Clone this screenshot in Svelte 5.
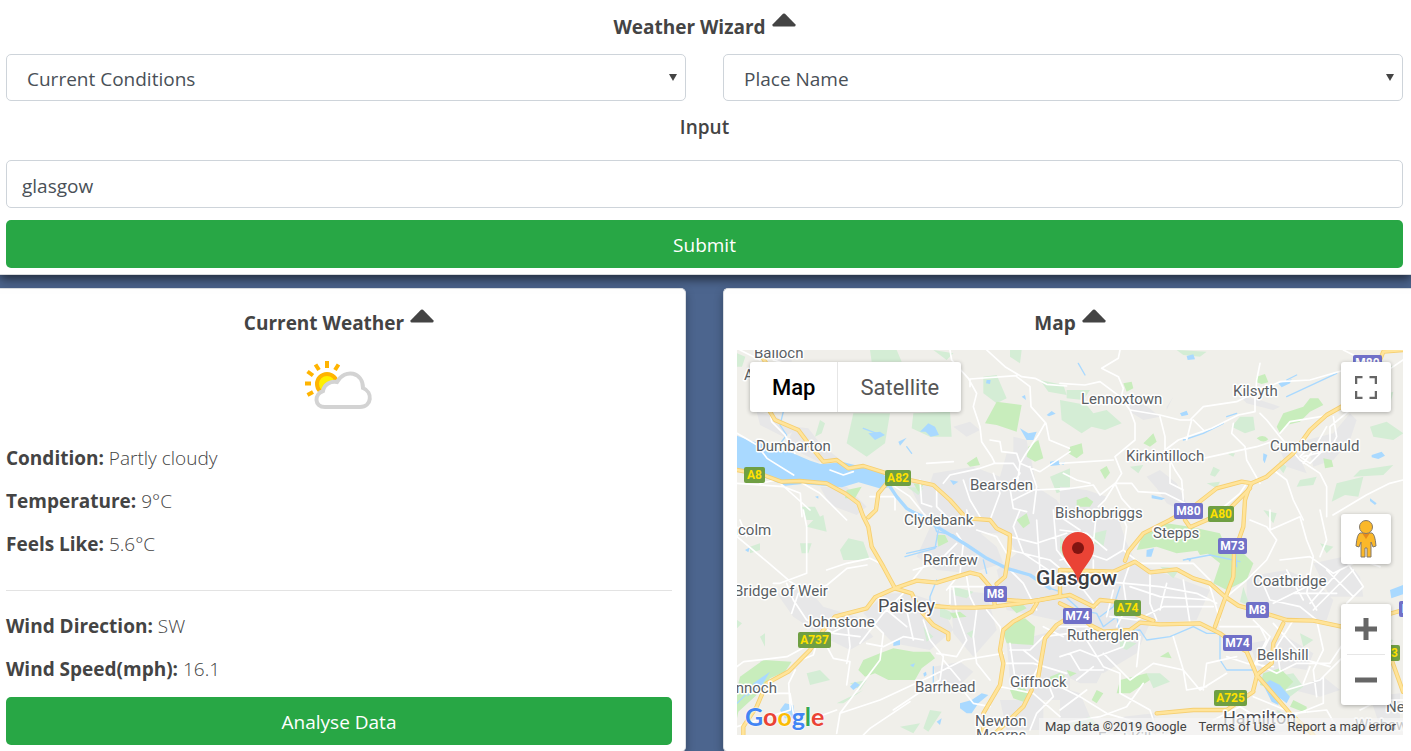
<script>
  let report = $state('current');
  let lookup = $state('place');
  let query = $state('glasgow');

  const conditions = [
    ['Condition:', 'Partly cloudy'],
    ['Temperature:', '9°C'],
    ['Feels Like:', '5.6°C']
  ];
  const wind = [
    ['Wind Direction:', 'SW'],
    ['Wind Speed(mph):', '16.1']
  ];

  // The map is drawn in four tiles, three units to the pixel.
  const tiles = [
    {
      at: '0 0',
      urban: 'M225 440l40 5 35 45 55 45-60 10-60-30-30-35ZM640 580l120-20 80 30 20-70 70 0 20 100 60 40 40 60-40 40-350 0-60-60ZM300 620l80 0 60 60-30 25-80-30ZM560 600l90 20 20 60-60 20ZM110 395l60 15 60 40-40 20-70-35ZM880 470l40 10 10 60-50 0ZM700 440l50-15 30 25-40 20ZM165 210l50 0 0 35-50 0Z',
      park: 'M450 210l80 0 15 35-90 0ZM400 400l110 0-15 90-55 40-60-40ZM580 400l110-5 5 75-65 0-55-25ZM790 290l40-5 30 70-30 15-40-30ZM870 210l35 0-5 40-30-20ZM300 420l15 10-10 30-20 10ZM560 620l50 5-15 20ZM960 300l70 15 10 30-55-10ZM640 210l60 10-20 20ZM51 220l25 10-10 30-15 0ZM245 680l40 0 20 40-45 0ZM990 590l60-25 0 60-40 15ZM540 330l30 0-10 30Z',
      green: 'M830 365l75 10-15 80-60-20-35-5ZM925 500l30-20 15 55-25 10-25-15ZM740 550l30-20 10 25-30 5ZM380 630l45-10-20 35-30 0ZM180 525l35 0 0 15-30 0ZM580 610l30 5-15 20Z',
      water: 'M51 467l40 15 110 30 70 30 30 10 70-5 60 15 60 20 15 40-20 5-70-20-50 15-120-10-50 5-90-35-55-10ZM445 460l35-5 15 10-30 15ZM600 455l25-25 20 10 12 25-25 5-15-15ZM535 485l25-12-20 24ZM900 445l25 15 25-5-10 25-20 0ZM990 545l25-5 5 15-30 3ZM800 300l12 0-2 12-12-2ZM905 350l10-5 3 15ZM980 405l15-12 12 8-20 8ZM285 650l10-2 0 8ZM690 600l25 5-15 10Z',
      river: 'M490 595L530 650 560 685 650 725M190 395l-10 40 20 30-15 20 30 40M430 445l40 15M560 500l15 20',
      minor: 'M690 210l5 30 50 55 25 45-10 40 20 60 5 45 30 45 10 20-45 15-90 20-20 25M800 210l55 50 50 30 40 5 35 18 60 5M750 297l140-10M890 290l40 30 3 60 45 50 10 50 60 25M975 430l-20 35-40 60-15 25-10 75M810 480l30 5 5 30 45 5 10 30 60 25 90-60M820 550l60 0 20 30-30 45 10 60 40 10M150 395l5 30 40 40 30 55M51 460l60 35 30 40 80 50M51 610l140 10 50 20 5 70 M120 610l50-10 100 90M240 605l60 35 40 40 40 40M330 570l40 15 30-10M510 610l60 40 40 50 20 20M600 600l5 70 30 10M650 620l0 60 30 30M730 600l20 60 30 50M820 580l20 60-30 80M880 660l60-30 110-5M930 560l20 60-10 80 M750 300l0 20M620 550l80-5M450 650l75 0 0 40M160 240l30 10 10 50M60 210l60 30'
    },
    {
      at: '1020 0',
      urban: 'M210 360l40 10 50 40-50 10-40-25ZM540 350l60 10 60 20-20 10-80-20ZM260 590l40-20 50 40 30 60-20 20-40-20-30-45ZM740 480l80-20 50-60 20 20-20 60-50 60-60 20ZM0 620l80 10 60 20-30 50-110 0ZM660 510l50 0 30 70-60-20ZM320 380l20-30-20 40Z',
      park: 'M0 360l80 15 20 25 40-10 45 40-50 20-40-10-30 20-60-40ZM540 410l40 0 5 40-30 10-40-20ZM930 440l50-15 50 35-30 20-60-10ZM950 350l50-15-10 40-50 20ZM830 610l80-20-15 60-40-5-40 20ZM720 600l50-10-10 25-50 5ZM900 570l100-15-30 30-90 5ZM350 210l90 5-20 15-50-5ZM210 560l40-5-15 25ZM460 560l20 10-15 20-15-5ZM20 330l70 0-20 30-50-5ZM500 520l25 0-5 10ZM900 250l60-10 40 20-40 20-50 5ZM660 540l20 20-10 20-15-20ZM440 610l40-5-10 20Z',
      green: 'M190 310l25-5 5 20-20 10ZM590 290l25-8 10 25-20 5-15-5ZM650 440l20-40 60-20 20-25 25 0 15 20-40 20-30 30-40 10-20 25ZM30 500l35-10 5 30-20 15-25-15ZM120 570l20-12 10 20-15 20ZM50 660l30-10 20 15-10 15-40 0ZM250 490l30-30 10 25-20 15ZM590 475q20-15 35 3q-15 15-35-3ZM790 535l25 5 5 20-25 5Z',
      water: 'M380 228l20-5 5 15-22 2ZM655 310l40-12-5 12-25 12ZM360 400l20-8 5 12-20 5ZM275 645l40 10-10 5-30-5ZM935 525l30-10 10 12-20 10-20-5ZM610 520l12 5-8 25-5-10ZM930 655l20 15-5 5-15-12ZM0 550l15-5-5 10Z',
      river: 'M55 250l20 35M680 350l150-70M370 480l60-20 60-30M500 410l30-10M680 300l30-15',
      minor: 'M180 210l-5 25-50 30 10 5 40 20 15 35-5 20 25 25M0 310l75 5 45-10 60 45 30 40 90 15 60 15 30 0 40-40 100-15 40-20 90-40 90-5 155-45M210 390l15 40 0 50-60 50 20 50-50 80-20 20M0 550l160-10M300 410l15 60 0 40 30 60 20 30 5 60M380 480l15-60M315 510l40-30 100-35 80-40 50-10 0-50M400 420l30 30M430 535l160-35 60-20M520 430l-5 30 40 40 5 40 40 70M600 400l20 20 40 50 60 70 60 40 20 40 0 90M640 570l40 30 20 60 30 60M660 460l30-35 60-10 60-10M800 440l-40 70-30 40 M820 410l10 60-20 40-80 20M870 390l-60 50 0 50-60 60-30-20 30-30M1029 600l-40 10-70 35-50 30-50 30M850 210l60 30 60 40 59-40M0 630l100-15 20 30 45-35 50 0 20 25 80 5 60 30M165 610l20 45 40 45M480 690l60-50 20-30M600 250l-10 50-3 40M10 580l40 20 40 10M330 550l0 60 40 20'
    },
    {
      at: '0 690',
      urban: 'M640 30l130 30 60 50 20 50-100 30-100-10-60-40ZM850 0l200 0 0 340-90-20-100-20-30-120 60-50-50-90ZM500 250l70 0 90 30 40 80-70 60-110-20-90-90ZM170 250l90-20 50 60 100 30 50 60-70 40-80-40-90-60ZM690 240l110 10 30 110-70 80-60-70ZM860 400l190-50 0 220-120 0-60-60ZM640 470l80-15 40 30-50 50-50-10ZM840 570l130 0 0 90-110 0ZM120 450l80 10-20 30-60-5Z',
      park: 'M280 30l30-15 10 50-60-15ZM385 85l45 10 20 55-80 0-10-30ZM240 100l35 0-10 30-20 0ZM90 110l30-10 0 20-30 10ZM260 490l40-10 30 30-60 15ZM430 540l-60 40-20 0 40-20ZM630 600l35 5-40 60-15-10ZM610 350l30 30-20 15ZM700 230l60 15-20 20-40-10ZM120 380l15-10 0 40ZM51 330l15 10-15 15ZM660 290l40 20-10 20-30-10ZM390 520l50-10-20 30ZM740 370l20-10-5 25ZM540 650l60-10-20 30Z',
      green: 'M430 450l50-20 40-15 60 10 50 0 15 20-40 30-20 35-80 0-40-20-30 10-20-20ZM870 340l45-15 30 25-5 55-80-5-10-30ZM60 500l70-50 85 5-20 30-45 20-40 50-55 50-8 40 0-90ZM650 75l25 0 10 20-30 15ZM890 30l30-20 10 30-20 15ZM870 290l30-15 20 20-30 15ZM690 310l30-5 20 15-40 5ZM990 500l50-20-10 30-40 10ZM870 540l40-10 20 25-20 20-30-10Z',
      water: 'M180 600l15-20 25 5 5 40-30 0ZM720 580l35-10 30-20 20 5-30 25-20 30-15 0-20-15ZM75 120l15-8-5 15ZM520 395l20-5 0 15-20 3ZM610 490l8-5 2 10-8 5ZM570 465l15-5-5 12ZM390 530l15-15 15 10-20 15ZM100 520l50-35-30 50-40 25ZM650 635l15-10-5 20ZM880 620l12 0-5 10Z',
      river: 'M640 35L650 65 700 75 740 105 800 145 860 175 930 195 990 235 1020 245M655 60l-10 55-90 25M650 110l-90 20M790 150l10 40M630 320l0-60 20-50M51 580l60-60M640 470l0 60',
      minor: 'M51 80l90 75 70 60 50 30 60-20 60-50 60-10M250 0l10 50 0 140-80 30-20 0M200 220l20 50 40 60 60 20M320 180l60-20 70-15 30 15M51 470l20-15 130-15 110-60 60-30M210 485l20-30 50-20 20-70M310 390l30 55 50 10-10 70M380 310l10 100-10 50M460 340l30 30-10 80-120 160-10 60M360 610l120-40 150-70 100-50 120-20M570 575l-120 80-20 20M520 600l90-60 50-30 10-70-40-50-20-60M440 400l50 10 60-30 60 10M550 250l-60 60-70 90M560 300l20 90M500 300l60 50M740 200l10 60 20 40-10 80 10 80 40 50M700 230l10 80 30 80-30 50-60-10M680 240l40-50 10-90-20-30M770 60l60 20 30 50M750 50l-10-50M860 170l50 50 40 80M900 0l-20 50 30 80 90 60M870 80l80 20 90-30M870 120l120 30 60 50M950 30l10 150M1000 0l10 120 40 50M690 280l0-50 120 0M800 300l40 50 10 40M870 420l60 0 40-40 80-10M850 460l90 0 100 30M840 530l100 20 80 70M890 540l-20-140M980 510l20 50-50 50-20 50M680 520l40 10 40 50 50 10M670 450l50 60M60 540l50 10 100 0 10 60M51 650l160-50-5-80 20-40M240 640l110-40M215 310l20-60M290 340l50 30 80 10M80 80l-20-50M610 170l-40 50M580 180l70-20 60-60M970 350l60 30 M910 420l50 40-30 60'
    },
    {
      at: '1020 690',
      urban: 'M0 0l170 10 30 90 30 60 220 80-40 90-140 10-40 90-100 60-80-20-50-60ZM0 410l90-10 50 60-30 60-50 0-60-30ZM560 200l120-20 90 40 50 50-20 60-140 0-100-40ZM570 400l110-20 80 50-20 50-60-10-30 60-50-30ZM570 620l90-20 60 60-150 15ZM760 160l90-20 50 60 10 60-100 0ZM0 530l60 20 30 70-90 50ZM930 560l90-10 0 110-60-10ZM190 620l90-10 20 60-100 5ZM700 540l90-40 50 40-60 20Z',
      park: 'M100 70l40-10-10 50-30-10ZM180 390l50 10-30 20-20-10ZM610 0l40 10-10 30ZM550 230l20 60-30-15ZM780 100l40 10-20 20ZM260 490l40 0 30 25-50 20ZM30 640l60-20 30 30-70 15ZM650 600l50 20-30 20ZM300 170l60 5-20 30ZM0 80l20 20-20 30ZM640 500l60-10 30 40-40 30-60-20ZM950 380l50 10-20 30ZM720 370l40 20-30 20Z',
      green: 'M260 60l60-20 70 10 90 20 20 50 40 0 40 40-20 50-60 30-40-20 20-60-50-40-80 10-60-20-60 10 20-50ZM180 510l80-20 10 20-60 40-40 0ZM610 490l50-15 40 40-30 30-70-20ZM110 540l20 10-20 30-15-10ZM400 100l60-5 20 30-60 10ZM300 440l25-15 10 20ZM0 110l40-10 0 30-30 10ZM20 480l30 10-20 10ZM700 570l40 20 0 20-50-20Z',
      water: 'M260 120l22-5-8 25-15 0ZM990 240l39-15 0 28-35 12ZM610 525l20-15 30 15 30 35-10 20-20-15-5 20-20-10ZM500 100l15-5 0 12ZM380 145l15 0-5 10Z',
      river: 'M0 245L60 300 110 310 130 350 170 320 180 365 240 360 260 390 330 380 400 350 440 370 480 370 480 450 500 480 580 480 630 530 700 630M370 150l80-15 90 20M180 230l-20 60-40 30M30 180l-10 40M530 170l-5-80',
      minor: 'M0 150l80-20 60 20 50-30 10-70-20-50M190 120l50 40 160 0 50 50M80 190l60 25 160 15 110 20 60 30M160 240l-20 80M210 160l-20 60 10 70-30 60M210 230l90 30 150 10M150 320l80 10 80-40 150 0M270 190l0 90 20 50M320 220l-20 80M370 210l20 130M210 360l-20 50-80 30-50-20-60 20M80 390l50 80 50 20 0 60 90 50 20 60M130 430l80 80 70-50 90 20 10 60 60-10M240 380l-10 90M0 350l90 0M30 430l30 50 70 0M0 530l60 30 80 50 100 30M250 520l-50 70-80 30-120 20M340 380l30 100 50 60 80-50M580 470l40-80-20-40-120 0M500 260l60-50 60-60 30-60-30-40-50-20M660 150l90-10 70 50 80-40 60 20M600 200l30 70 90 20 50 40 20 90-30 60 10 80M640 340l100 110 70 20M580 330l50 50-40 80 60 30 60-30 100 0 40-60M700 330l-50 80 10 70M530 440l-90 20-10 80M630 60l0-60M630 60l90-40 20 70 20 50-20 110 30 50M780 0l20 90-20 50M840 180l-90 100M880 180l-120 120M800 180l80 80M850 140l60 90-50 50M700 250l130 0M640 280l120-60M680 180l50 90M500 440l60 20 80 10M680 540l100-30 70-70M790 500l0 80-100 40M580 560l120 50 100-10 40 70M460 630l80-40 50 30 30 55M0 600l80-60M100 470l-50 40M0 180l120 0M40 200l70 90M100 150l0 70M0 60l80 10 60 50M110 0l-10 100M0 20l60 40M450 230l30 100M750 470l-20 50M900 600l60-30 69 0M960 500l-20 60'
    }
  ];

  const majors = [
    'M150 395L165 420 235 450 265 490 310 545 350 540 385 565 430 558 500 580 570 600 640 615 690 660 730 705 745 715 810 720 830 745 870 765 868 810 855 890 830 912',
    'M51 570L130 585 185 605 240 603 320 610 375 640 415 670 430 710 445 740 455 800 490 860 525 925',
    'M500 610L475 640 468 690 445 712',
    'M70 1365L70 1340 110 1280 140 1210 205 1175 270 1110 310 1050 345 1010 440 985 465 952 525 925 590 902 650 908 750 878 780 885 810 920 835 945 860 960 930 965 1020 950 1050 945 1120 980 1140 960 1190 965M525 925L575 940 600 990 640 1035 685 1060 685 1078',
    'M640 978L690 982 765 983 820 980 900 970 960 960 1020 948M825 980l-5-35',
    'M950 970L935 995 880 1025 850 1050 840 1110 850 1150 840 1215 790 1300 790 1365',
    'M1050 1010L1010 1035 975 1075 955 1190M935 1230L910 1280 820 1365M1020 950L1020 870 1180 875 1245 845 1290 877 1370 868 1420 895 1470 910 1515 950 1555 977 1620 995 1700 1020 1780 1022 1865 1040 1980 1010 2049 990',
    'M1020 970L1060 990 1110 1035 1150 1055 1230 1050 1260 1028 1320 1033 1440 1030 1500 1060 1540 1090 1580 1115 1610 1185 1710 1300 1780 1365',
    'M1485 1040L1510 970 1540 890 1542 820 1570 740 1575 660 1585 630 1595 610',
    'M1215 842L1225 815 1270 760 1350 720 1420 680 1490 625 1565 605 1595 610 1640 590 1720 520 1770 450 1820 405 1900 360 1980 240 1990 215 2049 210',
    'M1395 720L1410 742 1460 720 1530 685 1590 625',
    'M1610 1185L1655 1150 1660 1090 1690 1030M1610 1190L1600 1230M1310 1300L1420 1290 1520 1290 1600 1235M1240 1000l60 22M2015 1140l34 95M115 210l20 35 15 20'
  ];

  const labels = [
    [17, 8, 'Balloch'], [7, 30, 'Alexandria'], [19, 101, 'Dumbarton'], [233, 140, 'Bearsden'],
    [344, 54, 'Lennoxtown'], [496, 46, 'Kilsyth'], [533, 101, 'Cumbernauld'], [389, 111, 'Kirkintilloch'],
    [318, 168, 'Bishopbriggs'], [167, 175, 'Clydebank'], [-37, 185, 'Kilmacolm'], [186, 215, 'Renfrew'],
    [-3, 246, 'Bridge of Weir'], [67, 277, 'Johnstone'], [-49, 343, 'Lochwinnoch'], [178, 342, 'Barrhead'],
    [273, 337, 'Giffnock'], [238, 376, 'Newton'], [239, 390, 'Mearns'], [330, 290, 'Rutherglen'],
    [416, 188, 'Stepps'], [516, 236, 'Coatbridge'], [520, 310, 'Bellshill'], [618, 380, 'Wishaw'],
    [649, 362, 'Newarthill'], [361, 393, 'East Kilbride']
  ];

  const shields = [
    [7, 117, 21, 'A8'], [148, 120, 26, 'A82'], [437, 153, 29, 'M80'], [471, 156, 26, 'A80'],
    [481, 188, 29, 'M73'], [247, 236, 23, 'M8'], [326, 258, 29, 'M74'], [377, 250, 27, 'A74'],
    [61, 282, 33, 'A737'], [509, 252, 23, 'M8'], [486, 285, 29, 'M74'], [477, 340, 33, 'A725'],
    [616, 5, 29, 'M80'], [637, 295, 26, 'A73'], [662, 251, 23, 'M8']
  ];
</script>

{#snippet caret(name)}
  <button class="caret" type="button" aria-label={name}>
    <svg viewBox="0 0 24 14" width="24" height="14" aria-hidden="true">
      <path d="M11 .8Q12 0 13 .8L23.5 11.5Q24 13.5 22.5 13.5H1.5Q0 13.5.5 11.5Z" fill="#444" />
    </svg>
  </button>
{/snippet}

{#snippet facts(rows)}
  {#each rows as [name, value]}
    <p><strong>{name}</strong> {value}</p>
  {/each}
{/snippet}

<div class="page">
  <header>
    <h1>Weather Wizard {@render caret('Collapse search')}</h1>
    <form onsubmit={(e) => e.preventDefault()}>
      <div class="columns">
        <div class="select">
          <select aria-label="Report" bind:value={report}>
            <option value="current">Current Conditions</option>
            <option value="forecast">Forecast</option>
          </select>
        </div>
        <div class="select">
          <select aria-label="Search by" bind:value={lookup}>
            <option value="place">Place Name</option>
            <option value="coordinates">Coordinates</option>
          </select>
        </div>
      </div>
      <label for="query">Input</label>
      <input id="query" type="text" bind:value={query} />
      <button class="action" type="submit">Submit</button>
    </form>
  </header>

  <main class="columns">
    <section class="card weather">
      <h2>Current Weather {@render caret('Collapse current weather')}</h2>
      <svg class="sky" viewBox="0 0 68 48" width="68" height="48" role="img" aria-label="Partly cloudy">
        <circle cx="22" cy="23" r="10" fill="#fff000" stroke="#ffb400" stroke-width="4" />
        <path d="M22 0v7M10.500 3.500l3.500 5.500M2.500 10.500l5.500 4M0 22.500h6M2.500 34l5.500-3M33.500 3.500l-3.500 5.500" stroke="#ffb400" stroke-width="4" />
        <path d="M20 46C9 46 9 33 18 30C19 23 26 20 32 21C40 7 58 11 58 27C68 31 67 46 55 46Z" fill="#fff" stroke="#d3d3d3" stroke-width="4" />
      </svg>
      {@render facts(conditions)}
      <hr />
      {@render facts(wind)}
      <button class="action" type="button">Analyse Data</button>
    </section>

    <section class="card place">
      <h2>Map {@render caret('Collapse map')}</h2>
      <div class="map">
        <svg class="terrain" viewBox="0 0 666 385" preserveAspectRatio="xMidYMid slice" role="img" aria-label="Map of Glasgow">
          <rect width="666" height="385" fill="#f0efea" />
          <g transform="scale(.33333) translate(-51 -210)" fill="none" stroke-linejoin="round" stroke-linecap="round">
            {#each tiles as tile}
              <g transform="translate({tile.at})">
                <path d={tile.urban} fill="#e7e7e8" />
                <path d={tile.park} fill="#d4edd5" />
                <path d={tile.green} fill="#c8edbc" />
              </g>
            {/each}
            {#each tiles as tile}
              <g transform="translate({tile.at})">
                <path d={tile.water} fill="#a9d9ff" />
                <path d={tile.river} stroke="#a9d9ff" stroke-width="4" />
                <path d={tile.minor} stroke="#fff" stroke-width="5" />
              </g>
            {/each}
            <path d="M490 590L530 650 560 685 650 740 740 795 800 835 860 865 930 885 990 925" stroke="#a9d9ff" stroke-width="10" />
            {#each majors as road}<path d={road} stroke="#f6cf70" stroke-width="13" />{/each}
            {#each majors as road}<path d={road} stroke="#ffe49a" stroke-width="8" />{/each}
          </g>
          <g class="labels">
            {#each labels as [x, y, name]}<text {x} {y}>{name}</text>{/each}
            <text class="town" x="141" y="262">Paisley</text>
            <text class="town" x="486" y="374">Hamilton</text>
            <text class="city" x="299" y="235">Glasgow</text>
          </g>
          {#each shields as [x, y, w, name]}
            <rect {x} {y} width={w} height="16" rx="2" fill={name[0] === 'M' ? '#7070c8' : '#6f9f43'} />
            <text class="shield" x={x + w / 2} y={y + 12} fill={name[0] === 'M' ? '#fff' : '#ffe100'}>{name}</text>
          {/each}
          <path d="M341 233C339 218 325 211 325 198A16 16 0 0 1 357 198C357 211 343 218 341 233Z" fill="#ea4335" />
          <circle cx="341" cy="198" r="6" fill="#811411" />
        </svg>

        <div class="kinds">
          <button type="button" class="chosen">Map</button>
          <button type="button">Satellite</button>
        </div>
        <button class="tool full" type="button" aria-label="Toggle fullscreen">
          <svg viewBox="0 0 22 23" width="22" height="23" aria-hidden="true">
            <path d="M1 8V1H7.500M14.500 1H21V8M21 15v7H14.500M7.500 22H1V15" fill="none" stroke="#666" stroke-width="2.500" />
          </svg>
        </button>
        <div class="side">
          <button class="tool" type="button" aria-label="Street View">
            <svg viewBox="0 0 22 38" width="22" height="38" aria-hidden="true">
              <path d="M5 13h12q3 1 4 13l-3 1-2-5v15h-4v-9h-2v9H6V22l-2 5-3-1Q2 14 5 13Z" fill="#fbb829" stroke="#83796a" stroke-width="1" />
              <path d="M7 13h8l-4 6Z" fill="#e58b1c" />
              <circle cx="11" cy="7" r="6.500" fill="#fbb829" stroke="#83796a" stroke-width="1" />
            </svg>
          </button>
          <div class="zoom">
            <button type="button" aria-label="Zoom in">
              <svg viewBox="0 0 22 22" width="22" height="22" aria-hidden="true"><path d="M0 11h22M11 0v22" stroke="#666" stroke-width="5" /></svg>
            </button>
            <button type="button" aria-label="Zoom out">
              <svg viewBox="0 0 22 22" width="22" height="22" aria-hidden="true"><path d="M0 11h22" stroke="#666" stroke-width="5" /></svg>
            </button>
          </div>
        </div>
        <a class="logo" href="#google" aria-label="Google"><span class="blue">G</span><span class="red">o</span><span class="yellow">o</span><span class="blue">g</span><span class="green">l</span><span class="red">e</span></a>
        <div class="credits">
          <span>Map data ©2019 Google</span>
          <a href="#terms">Terms of Use</a>
          <a href="#report">Report a map error</a>
        </div>
      </div>
    </section>
  </main>
</div>

<style>
  :global(body) {
    background: #4c658e;
    overflow: hidden;
  }
  .page,
  .page * {
    box-sizing: border-box;
  }
  .page {
    font-family: 'Open Sans', 'Noto Sans', sans-serif;
    font-size: 19px;
    line-height: 31px;
    color: #444;
  }
  button,
  input,
  select {
    font: inherit;
    color: inherit;
    margin: 0;
  }
  button {
    border: 0;
    padding: 0;
    background: none;
    cursor: pointer;
  }
  header {
    position: relative;
    padding: 12px 8px 6px 6px;
    background: #fff;
    border-bottom: 1px solid #d9dbde;
    box-shadow: 0 4px 10px rgba(0, 0, 0, 0.6);
  }
  h1,
  h2 {
    display: flex;
    justify-content: center;
    gap: 6px;
    margin: 0;
    font-size: 19px;
    line-height: 31px;
    font-weight: 700;
  }
  .caret {
    display: flex;
    height: 18px;
    padding-top: 1px;
  }
  form {
    display: flex;
    flex-direction: column;
    padding-top: 11px;
  }
  .columns {
    display: grid;
    grid-template-columns: 1fr 1fr;
    gap: 37px;
  }
  .select {
    position: relative;
  }
  .select::after {
    content: '';
    position: absolute;
    right: 9px;
    top: 20px;
    border: 4px solid transparent;
    border-top: 7px solid #444;
    border-bottom: 0;
    pointer-events: none;
  }
  select,
  input {
    display: block;
    width: 100%;
    height: 47px;
    border: 1px solid #ced4da;
    border-radius: 5px;
    background: #fff;
    color: #495057;
    outline: 0;
  }
  select {
    appearance: none;
    padding: 3px 20px 0;
  }
  input {
    height: 48px;
    padding: 3px 15px 0;
  }
  label {
    align-self: center;
    padding: 11px 0 17px;
    font-weight: 600;
  }
  .action {
    width: 100%;
    height: 48px;
    padding-top: 2px;
    border-radius: 5px;
    background: #28a745;
    color: #fff;
  }
  form .action {
    margin-top: 12px;
  }
  main {
    padding: 13px 8px 0 6px;
  }
  .card {
    background: #fff;
    border: 1px solid #dcdfe3;
    box-shadow: 0 4px 10px rgba(0, 0, 0, 0.3);
  }
  .weather {
    margin-left: -6px;
    padding: 19px 13px 6px 6px;
    border-left: 0;
    border-radius: 0 5px 5px 0;
  }
  .place {
    margin-right: -8px;
    padding: 19px 8px 15px 13px;
    border-right: 0;
    border-radius: 5px 0 0 5px;
  }
  .sky {
    display: block;
    margin: 22px auto 34px;
  }
  p {
    margin: 0 0 12px;
    font-weight: 300;
  }
  strong {
    font-weight: 700;
  }
  hr {
    margin: 30px 0 20px;
    border: 0;
    border-top: 1px solid #e3e3e3;
  }
  .weather .action {
    display: block;
  }
  .map {
    position: relative;
    height: 385px;
    margin-top: 11px;
    overflow: hidden;
    font-family: Roboto, sans-serif;
  }
  .terrain {
    display: block;
    width: 100%;
    height: 100%;
  }
  .labels text {
    font-size: 15px;
    fill: #5b5f64;
    stroke: #fff;
    stroke-width: 3px;
    stroke-linejoin: round;
    paint-order: stroke;
  }
  .labels .town {
    font-size: 18px;
    fill: #4b4d51;
  }
  .labels .city {
    font-size: 21px;
    font-weight: 500;
    fill: #3c3e42;
  }
  .shield {
    font-size: 12px;
    font-weight: 700;
    text-anchor: middle;
  }
  .kinds,
  .tool,
  .zoom {
    background: #fff;
    border-radius: 3px;
    box-shadow: 0 1px 4px rgba(0, 0, 0, 0.3);
  }
  .kinds {
    position: absolute;
    left: 13px;
    top: 12px;
    display: flex;
    height: 50px;
    font-size: 22px;
    color: #565656;
  }
  .kinds button {
    padding: 0 22px;
  }
  .kinds .chosen {
    border-right: 1px solid #e6e6e6;
    font-weight: 500;
    color: #000;
  }
  .tool,
  .zoom button {
    display: grid;
    place-items: center;
    width: 50px;
    height: 50px;
  }
  .full {
    position: absolute;
    right: 12px;
    top: 12px;
  }
  .side {
    position: absolute;
    right: 12px;
    bottom: 30px;
    display: grid;
    gap: 40px;
  }
  .zoom button + button {
    position: relative;
    height: 51px;
  }
  .zoom button + button::before {
    content: '';
    position: absolute;
    left: 6px;
    right: 6px;
    top: 0;
    border-top: 1px solid #e6e6e6;
  }
  .logo {
    position: absolute;
    left: 8px;
    bottom: 3px;
    font-family: Lato, sans-serif;
    font-size: 25px;
    font-weight: 700;
    text-decoration: none;
    text-shadow: 0 0 2px #fff, 0 0 2px #fff;
  }
  .blue {
    color: #4285f4;
  }
  .red {
    color: #ea4335;
  }
  .yellow {
    color: #fbbc05;
  }
  .green {
    color: #34a853;
  }
  .credits {
    position: absolute;
    right: 0;
    bottom: 0;
    display: flex;
    gap: 12px;
    padding: 0 7px 0 6px;
    background: rgba(245, 245, 245, 0.7);
    font-size: 13px;
    line-height: 17px;
    color: #444;
  }
  .credits a {
    color: inherit;
    text-decoration: none;
  }
</style>
